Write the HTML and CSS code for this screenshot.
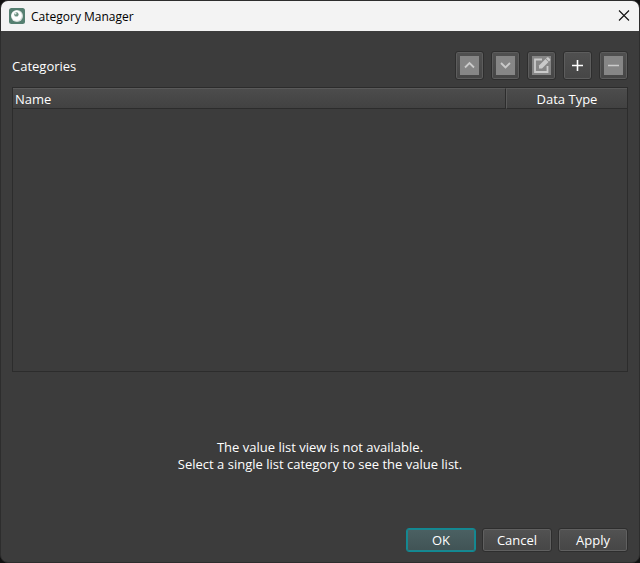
FILE: index.html
```html
<!DOCTYPE html>
<html lang="en">
<head>
    <meta charset="UTF-8">
    <meta name="viewport" content="width=device-width, initial-scale=1.0">
    <title>Category Manager</title>
    <link rel="stylesheet" href="styles.css">
</head>
<body>

    <div class="dialog">
        <header class="titlebar">
            <svg class="app-icon" width="16" height="16" viewBox="0 0 16 16" aria-hidden="true">
                <rect width="16" height="16" rx="2.5" fill="#557f70"/>
                <circle cx="8" cy="8" r="6" fill="#d3dcd8"/>
                <circle cx="7.6" cy="7.6" r="5.2" fill="#fff"/>
                <circle cx="7.4" cy="6.4" r="2.2" fill="#6d9182"/>
                <circle cx="6.5" cy="5.5" r="1" fill="#e8eeeb"/>
            </svg>
            <h1 class="title">Category Manager</h1>
            <button class="close-btn" type="button" aria-label="Close">
                <svg width="12" height="12" viewBox="0 0 12 12">
                    <path d="M1 .5l10 10M11 .5L1 10.500" stroke="#111" stroke-width="1.1" fill="none"/>
                </svg>
            </button>
        </header>

        <main class="content">
            <div class="toolbar">
                <h2 class="section-title">Categories</h2>
                <div class="tools">
                    <button class="tool-btn" type="button" aria-label="Move up" disabled>
                        <svg width="19" height="19" viewBox="0 0 19 19">
                            <path d="M5 11.5L9.5 7l4.5 4.5" stroke="#cacaca" stroke-width="1.8" fill="none"/>
                        </svg>
                    </button>
                    <button class="tool-btn" type="button" aria-label="Move down" disabled>
                        <svg width="19" height="19" viewBox="0 0 19 19">
                            <path d="M5 7l4.5 4.5L14 7" stroke="#cacaca" stroke-width="1.8" fill="none"/>
                        </svg>
                    </button>
                    <button class="tool-btn" type="button" aria-label="Edit" disabled>
                        <svg width="19" height="19" viewBox="0 0 19 19">
                            <path d="M10 3.5H3V16h12.500V10" stroke="#cacaca" stroke-width="1.8" fill="none"/>
                            <path d="M7 12.500V9.500L13.500 3l3 3L10 12.500z" fill="#cacaca"/>
                            <path d="M14 2.500l1-1q.8-.7 1.500 0L18 3q.7.7 0 1.500l-1 1z" fill="#cacaca"/>
                        </svg>
                    </button>
                    <button class="tool-btn" type="button" aria-label="Add">
                        <svg width="19" height="19" viewBox="0 0 19 19">
                            <path d="M9.5 4v11M4 9.5h11" stroke="#fff" stroke-width="1.6" fill="none"/>
                        </svg>
                    </button>
                    <button class="tool-btn" type="button" aria-label="Remove" disabled>
                        <svg width="19" height="19" viewBox="0 0 19 19">
                            <path d="M4 9.5h11" stroke="#cacaca" stroke-width="1.6" fill="none"/>
                        </svg>
                    </button>
                </div>
            </div>

            <div class="table-box">
                <table class="categories">
                    <thead>
                        <tr>
                            <th class="col-name" scope="col">Name</th>
                            <th class="col-type" scope="col">Data Type</th>
                        </tr>
                    </thead>
                    <tbody></tbody>
                </table>
            </div>

            <p class="message">The value list view is not available.<br>Select a single list category to see the value list.</p>
        </main>

        <footer class="actions">
            <button class="btn btn-default" type="button">OK</button>
            <button class="btn" type="button">Cancel</button>
            <button class="btn" type="button">Apply</button>
        </footer>
    </div>

</body>
</html>
```

FILE: styles.css
```css
* {
    box-sizing: border-box;
}
body {
    margin: 0;
    background: #111;
    color: #fff;
    font-family: "Open Sans", "Noto Sans", sans-serif;
    font-size: 13px;
    line-height: 17px;
}
.dialog {
    display: flex;
    flex-direction: column;
    min-height: 100vh;
    border: 1px solid #2d2d2d;
    border-radius: 8px;
    background: #3c3c3c;
    overflow: hidden;
}

/* title bar */
.titlebar {
    display: flex;
    align-items: center;
    gap: 6px;
    height: 30px;
    padding: 0 7px 0 8px;
    background: #f3f3f3;
    color: #000;
}
.title {
    flex: 1;
    margin: 0;
    font-size: 12px;
    font-weight: normal;
}
.close-btn {
    display: flex;
    padding: 2px;
    border: none;
    background: none;
}

/* categories */
.content {
    flex: 1;
    display: flex;
    flex-direction: column;
    padding: 20px 11px 0;
}
.toolbar {
    display: flex;
    align-items: center;
    justify-content: space-between;
    margin-bottom: 7px;
}
.section-title {
    margin: 0;
    padding-top: 2px;
    font-size: 13px;
    font-weight: normal;
}
.tools {
    display: flex;
    gap: 7px;
}
.tool-btn {
    display: flex;
    align-items: center;
    justify-content: center;
    width: 29px;
    height: 29px;
    padding: 0;
    border: 1px solid #2e2e2e;
    border-radius: 3px;
    background: linear-gradient(#505050, #464646);
    box-shadow: inset 0 0 0 1px #5d5d5d;
}
.tool-btn:disabled svg {
    background: #868686;
}
.table-box {
    flex: 1;
    border: 1px solid #2c2c2c;
}
.categories {
    width: 100%;
    border-collapse: separate;
    border-spacing: 0;
    table-layout: fixed;
}
.categories th {
    height: 21px;
    padding: 2px 2px 0;
    border-top: 1px solid #5a5a5a;
    border-bottom: 1px solid #2c2c2c;
    background: linear-gradient(#4c4c4c, #424242);
    font-weight: normal;
}
.categories .col-name {
    border-right: 1px solid #2c2c2c;
    text-align: left;
}
.categories .col-type {
    width: 121px;
    border-left: 1px solid #5a5a5a;
    text-align: center;
}
.message {
    margin: 67px 0 55px;
    text-align: center;
}

/* bottom buttons */
.actions {
    display: flex;
    justify-content: flex-end;
    gap: 6px;
    padding: 0 11px 10px;
}
.btn {
    width: 70px;
    height: 24px;
    padding: 0;
    border: 1px solid #2e2e2e;
    border-radius: 3px;
    background: linear-gradient(#525252, #464646);
    box-shadow: inset 0 0 0 1px #606060;
    color: #fff;
    font: inherit;
}
.btn-default {
    border-color: #0e8a94;
    background: linear-gradient(#4b6163, #405355);
    box-shadow: inset 0 0 0 1px #1c858d;
}
```
